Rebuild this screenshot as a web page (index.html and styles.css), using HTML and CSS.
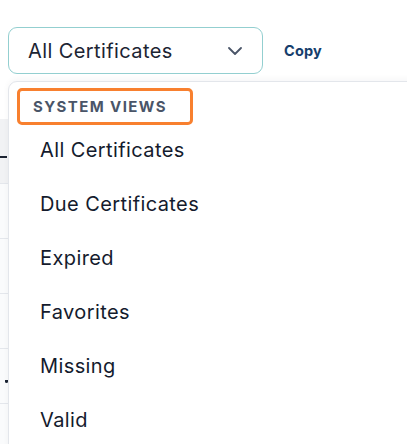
FILE: index.html
```html
<!DOCTYPE html>
<html lang="en">
<head>
  <meta charset="UTF-8">
  <meta name="viewport" content="width=device-width, initial-scale=1.0">
  <title>Certificates</title>
  <link rel="stylesheet" href="styles.css">
</head>
<body>
  <div class="toolbar">
    <div class="view-select">
      <span class="view-select-text">All Certificates</span>
      <svg class="chevron" width="14" height="8" viewBox="0 0 14 8" fill="none">
        <path d="M1 1l6 6 6-6" stroke="#4a5568" stroke-width="1.8" stroke-linecap="round" stroke-linejoin="round"/>
      </svg>
    </div>
    <button type="button" class="copy-btn">Copy</button>
  </div>

  <div class="grid">
    <div class="grid-head"><span class="head-mark"></span></div>
    <div class="grid-row"></div>
    <div class="grid-row"></div>
    <div class="grid-row"></div>
    <div class="grid-row"><span class="row-mark"></span></div>
    <div class="grid-row"></div>
  </div>

  <div class="menu">
    <div class="menu-label">System Views</div>
    <ul class="menu-list">
      <li>All Certificates</li>
      <li>Due Certificates</li>
      <li>Expired</li>
      <li>Favorites</li>
      <li>Missing</li>
      <li>Valid</li>
    </ul>
  </div>
</body>
</html>
```

FILE: styles.css
```css
body {
  margin: 0;
  font-family: Inter, "Noto Sans", sans-serif;
  background: #fff;
  overflow: hidden;
  position: relative;
  height: 444px;
}
.toolbar {
  display: flex;
  align-items: center;
  padding: 27px 0 0 8px;
  height: 47px;
}
.view-select {
  box-sizing: border-box;
  width: 255px;
  height: 47px;
  border: 1px solid #93cfd0;
  border-radius: 9px;
  display: flex;
  align-items: center;
  justify-content: space-between;
  padding: 0 20px 0 19px;
}
.view-select-text {
  font-size: 20px;
  letter-spacing: 0.4px;
  color: #1c2433;
}
.copy-btn {
  margin-left: 21px;
  background: none;
  border: none;
  padding: 0;
  font-family: inherit;
  font-size: 14.5px;
  font-weight: 700;
  letter-spacing: 0.2px;
  color: #163e6c;
}
.grid {
  margin-top: 45px;
}
.grid-head {
  height: 64px;
  background: #f1f2f4;
  display: flex;
  align-items: flex-start;
}
.head-mark {
  display: block;
  width: 7px;
  height: 2px;
  background: #1c2433;
  margin-top: 37px;
}
.grid-row {
  height: 54px;
  background: #fafbfc;
  border-top: 1px solid #e4e7ec;
}
.grid-row:first-of-type {
  height: 62px;
}
.row-mark {
  display: block;
  width: 3px;
  height: 3px;
  margin: 31px 0 0 5px;
  background: #1c2433;
  border-radius: 0 0 2px 2px;
}
.menu {
  position: absolute;
  top: 81px;
  left: 8px;
  right: -20px;
  bottom: -20px;
  background: #fff;
  border: 1px solid #e3e6eb;
  border-radius: 9px;
  box-shadow: 0 -2px 6px rgba(16, 24, 40, 0.04);
  padding: 6px 8px;
}
.menu-label {
  display: inline-block;
  box-sizing: border-box;
  width: 176px;
  height: 37px;
  line-height: 31px;
  border: 3px solid #f8802f;
  border-radius: 5px;
  padding-left: 13px;
  font-size: 15px;
  font-weight: 700;
  letter-spacing: 1.4px;
  text-transform: uppercase;
  color: #4a5568;
}
.menu-list {
  list-style: none;
  margin: -2px 0 0;
  padding: 0;
}
.menu-list li {
  height: 54px;
  line-height: 54px;
  padding-left: 23px;
  font-size: 20px;
  letter-spacing: 0.4px;
  color: #141b2d;
}
```
